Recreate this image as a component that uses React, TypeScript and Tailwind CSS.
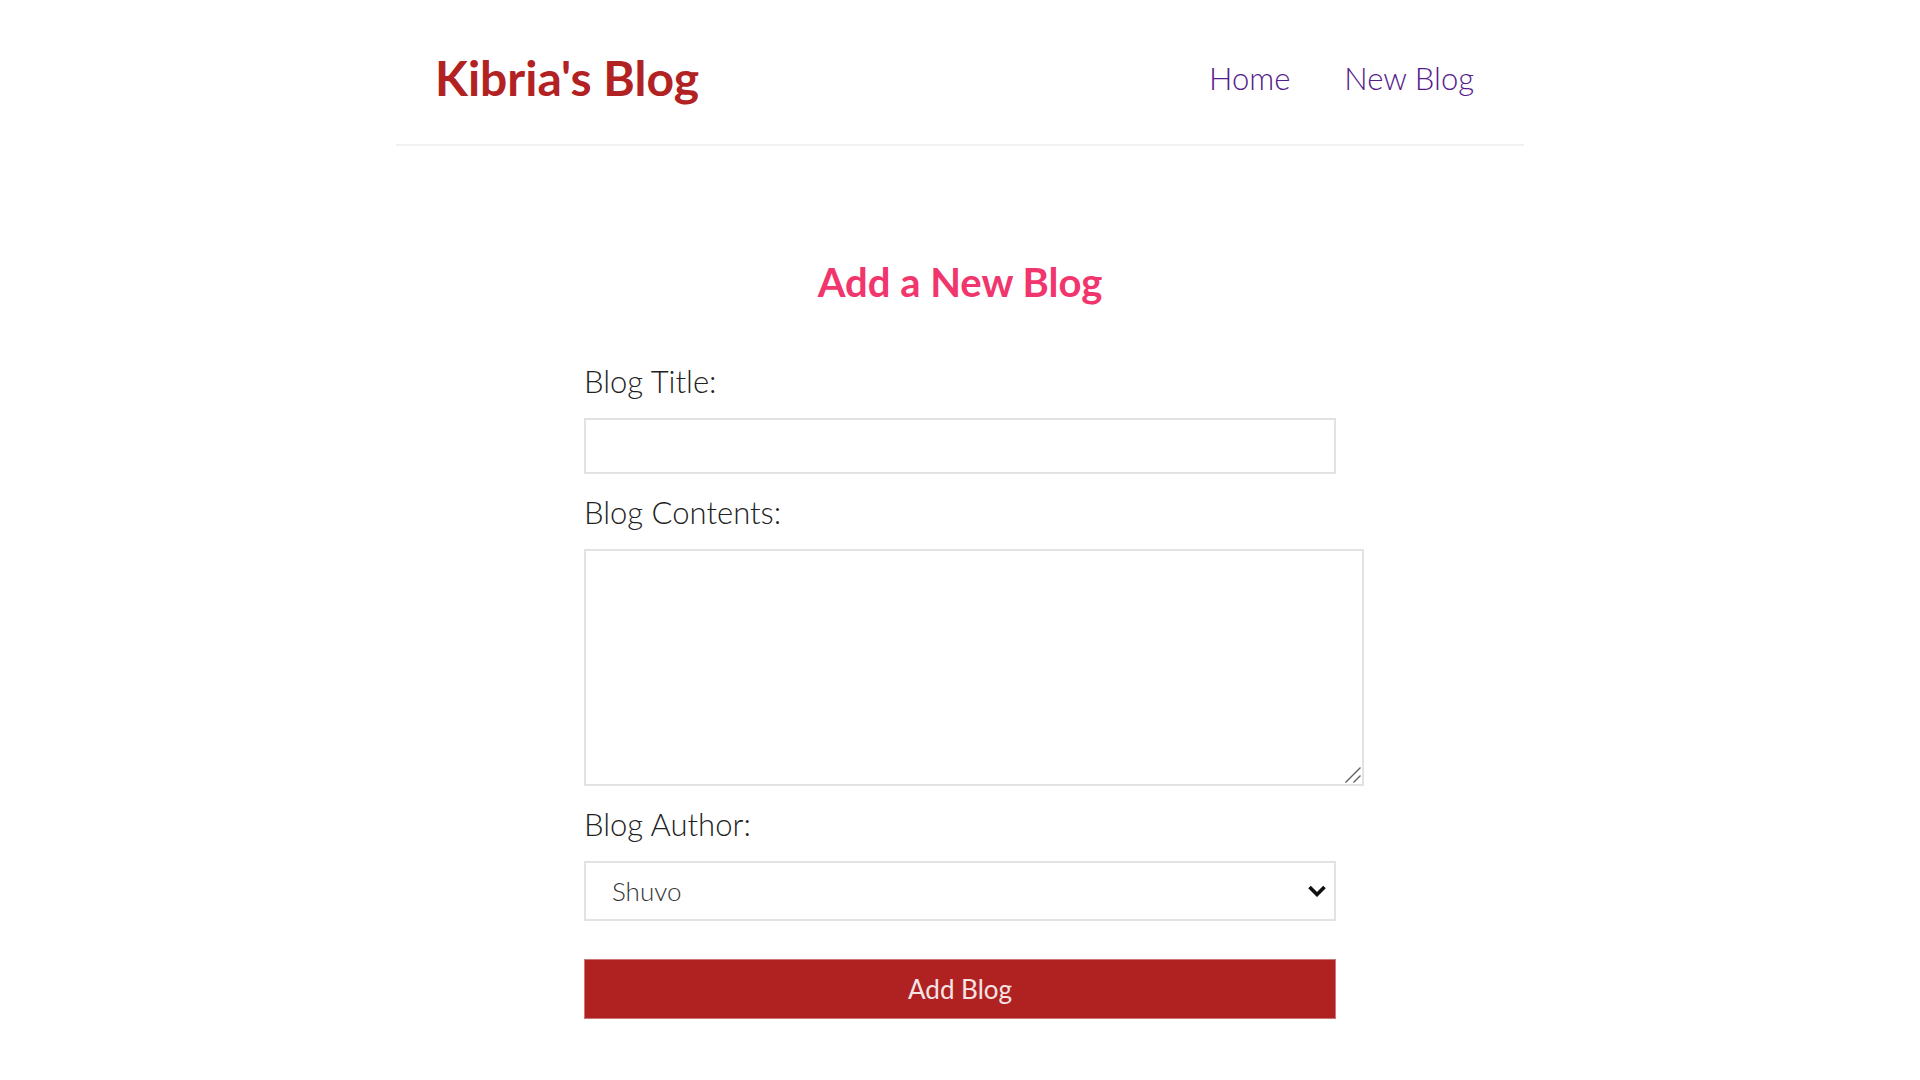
import React, { useState } from 'react';

const links = ['Home', 'New Blog'];
const authors = ['Shuvo', 'Kibria'];

const labelClass = 'block pt-[19px] pb-[17px] text-[31px] leading-[39px] font-light text-[#222222]';
const fieldClass =
  'block border-2 border-[#e2e2e2] bg-white px-[26px] text-[26px] font-light text-[#333333] outline-none';

function Navbar() {
  return (
    <nav className="mx-auto flex max-w-[1128px] items-center justify-between border-b-2 border-[#f2f2f2] pt-[39px] pr-[50px] pb-[27px] pl-[39px]">
      <h1 className="text-[48px] leading-[78px] font-bold text-[#b22222]">Kibria's Blog</h1>
      <div className="flex gap-[54px]">
        {links.map((link) => (
          <a key={link} href="#" className="text-[31px] leading-[39px] font-light text-[#551a8b]">
            {link}
          </a>
        ))}
      </div>
    </nav>
  );
}

function NewBlogForm() {
  const [author, setAuthor] = useState(authors[0]);
  return (
    <form className="mx-auto max-w-[752px]" onSubmit={(e) => e.preventDefault()}>
      <label htmlFor="title" className={labelClass}>
        Blog Title:
      </label>
      <input id="title" type="text" className={`${fieldClass} h-[56px] w-full`} />

      <label htmlFor="contents" className={labelClass}>
        Blog Contents:
      </label>
      <div className="relative -mr-7">
        <textarea
          id="contents"
          className={`${fieldClass} h-[237px] w-full resize-y py-3 [&::-webkit-resizer]:hidden`}
        />
        <svg
          className="pointer-events-none absolute right-[3px] bottom-[3px] size-4"
          viewBox="0 0 16 16"
          fill="none"
          stroke="#606060"
          strokeWidth="1.4"
          aria-hidden="true"
        >
          <path d="M0.5 15.5 15.5 0.5M8.5 15.5 15.5 8.5" />
        </svg>
      </div>

      <label htmlFor="author" className={labelClass}>
        Blog Author:
      </label>
      <div className="relative">
        <select
          id="author"
          value={author}
          onChange={(e) => setAuthor(e.target.value)}
          className={`${fieldClass} h-[60px] w-full appearance-none`}
        >
          {authors.map((name) => (
            <option key={name}>{name}</option>
          ))}
        </select>
        <svg
          className="pointer-events-none absolute top-6 right-[10px] h-3 w-[18px]"
          viewBox="0 0 18 12"
          fill="none"
          stroke="#101010"
          strokeWidth="3.6"
          aria-hidden="true"
        >
          <path d="M1.5 2 9 9.5 16.5 2" />
        </svg>
      </div>

      <button
        type="submit"
        className="mt-[38px] block h-[60px] w-full border border-[#cf7474] bg-[#b02222] text-[26px] text-[#f4e4e4]"
      >
        Add Blog
      </button>
    </form>
  );
}

export default function App() {
  return (
    <div className="min-h-screen bg-white font-['Lato',sans-serif]">
      <Navbar />
      <main className="pt-[112px] pb-[60px]">
        <h2 className="pb-[37px] text-center text-[40px] leading-[48px] font-bold text-[#f1356d]">
          Add a New Blog
        </h2>
        <NewBlogForm />
      </main>
    </div>
  );
}
